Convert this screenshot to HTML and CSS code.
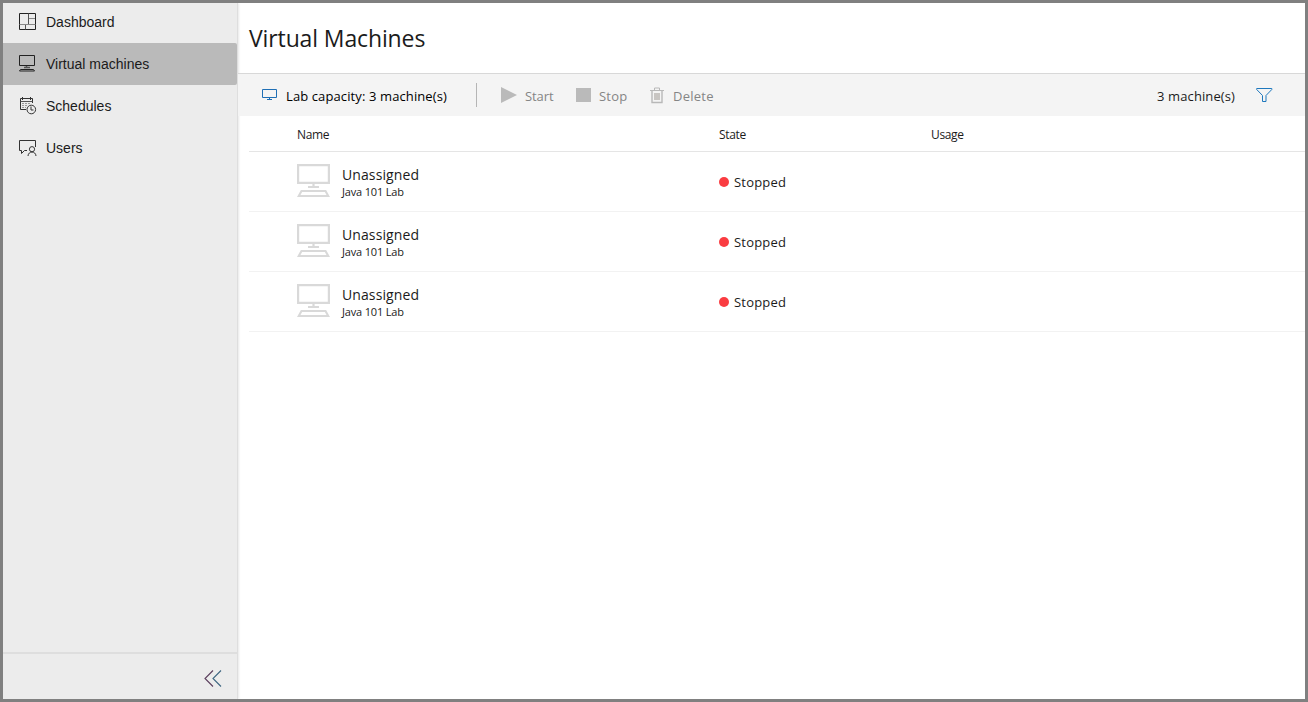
FILE: index.html
```html
<!DOCTYPE html>
<html lang="en">
<head>
<meta charset="utf-8">
<title>Virtual Machines</title>
<link rel="stylesheet" href="styles.css">
</head>
<body>
<svg class="defs" width="0" height="0">
  <symbol id="computer" viewBox="0 0 33 33">
    <path d="M1.100 1.100h30.800v17.800H1.100zM16.500 20v3M11 23h11" fill="none" stroke="#d9d9d9" stroke-width="2.200"/>
    <path d="M4.500 27h24l2.800 5H1.700z" fill="none" stroke="#d9d9d9" stroke-width="2.100"/>
  </symbol>
</svg>
<div class="app">
  <aside class="sidebar">
    <nav class="nav">
      <a class="nav-item">
        <svg width="18" height="18" fill="none" stroke="#222"><path d="M.5.5h16v16H.5z"/><path d="M9.500.5v11M6.500 11.500v5" stroke="#555"/><path d="M.5 11.500h16M10 5.500h6" stroke="#888"/></svg>
        <span>Dashboard</span>
      </a>
      <a class="nav-item selected">
        <svg width="18" height="18" fill="none" stroke="#222"><path d="M.5.5h15v10H.5z"/><path d="M7.500 11v2M5 12.500h6" stroke="#555" stroke-width="1.500"/><path d="M1.500 14.500h13l1 1.500H.5z"/></svg>
        <span>Virtual machines</span>
      </a>
      <a class="nav-item">
        <svg width="18" height="18" fill="none" stroke="#333"><path d="M7 12.500H1.500V1.500h12V6M3.500 0v3M11.500 0v3"/><path d="M1.500 4.500h12" stroke="#555"/><path d="M3 6.500h9M3 8.500h5M3 10.500h4" stroke="#999" stroke-dasharray="2 1"/><circle cx="12.300" cy="12.500" r="4.300"/><path d="M12 9.500v3.500H14.500"/></svg>
        <span>Schedules</span>
      </a>
      <a class="nav-item">
        <svg width="18" height="18" fill="none" stroke="#333"><path d="M8 11.500H5.500L2.500 14.500v-3H.500v-10h16V8"/><circle cx="13" cy="10.200" r="2.600"/><path d="M9 17c.300-5.300 7.700-5.300 8 0"/></svg>
        <span>Users</span>
      </a>
    </nav>
    <div class="collapse">
      <svg width="18" height="18" fill="none" stroke-width="1.100"><path d="M9 .500L1 8.500l8 8" stroke="#5a3d5c"/><path d="M17 .500L9 8.500l8 8" stroke="#3d6580"/></svg>
    </div>
  </aside>
  <main class="main">
    <header class="page-header"><h1>Virtual Machines</h1></header>
    <div class="toolbar">
      <div class="tool capacity">
        <svg width="16" height="14" fill="none" stroke="#1f6fb5"><path d="M.500 1.500h14v8H.500zM7.500 10v1.500M5 11.500h5"/></svg>
        <span class="capacity-text">Lab capacity: 3 machine(s)</span>
      </div>
      <div class="divider"></div>
      <div class="tool disabled start">
        <svg width="16" height="16" fill="#bababa"><path d="M0 0l16 8L0 16z"/></svg>
        <span class="start-text">Start</span>
      </div>
      <div class="tool disabled stop">
        <svg width="15" height="14" fill="#bababa"><path d="M0 0h15v14H0z"/></svg>
        <span class="stop-text">Stop</span>
      </div>
      <div class="tool disabled delete">
        <svg width="14" height="17" fill="none" stroke="#b8b8b8"><path d="M0 3.500h14M4.500 3V1h5v2"/><path d="M2 4v11.500h10V4" stroke-width="1.400"/><path d="M4 6h6v7H4z" fill="#c8c5c2" stroke="none"/></svg>
        <span class="delete-text">Delete</span>
      </div>
      <div class="tool filter">
        <span class="count">3 machine(s)</span>
        <svg width="17" height="16" fill="none" stroke="#1f78bd"><path d="M.700 1.500h15.100v1L10 8.500v6H6.500v-6L.700 2.500z"/></svg>
      </div>
    </div>
    <section class="table">
      <div class="row head"><span class="name">Name</span><span class="state">State</span><span class="usage">Usage</span></div>
      <div class="row">
        <div class="name machine"><svg width="33" height="33"><use href="#computer"/></svg><div class="labels"><div class="user">Unassigned</div><div class="lab">Java 101 Lab</div></div></div>
        <div class="state status"><i class="dot"></i><span>Stopped</span></div>
      </div>
      <div class="row">
        <div class="name machine"><svg width="33" height="33"><use href="#computer"/></svg><div class="labels"><div class="user">Unassigned</div><div class="lab">Java 101 Lab</div></div></div>
        <div class="state status"><i class="dot"></i><span>Stopped</span></div>
      </div>
      <div class="row">
        <div class="name machine"><svg width="33" height="33"><use href="#computer"/></svg><div class="labels"><div class="user">Unassigned</div><div class="lab">Java 101 Lab</div></div></div>
        <div class="state status"><i class="dot"></i><span>Stopped</span></div>
      </div>
    </section>
  </main>
</div>
</body>
</html>
```
FILE: styles.css
```css
* { box-sizing: border-box; }
body { margin: 0; font-family: "Open Sans", "Noto Sans", sans-serif; color: #1b1b1b; }
svg { flex: none; display: block; }
.defs { position: absolute; }
.app { display: flex; width: 1308px; height: 702px; border: 3px solid #808080; background: #fff; overflow: hidden; }
.sidebar { display: flex; flex-direction: column; width: 235px; background: #ececec; border-right: 1px solid #dedede; font-family: "Liberation Sans", Arial, sans-serif; box-shadow: 1px 0 2px #e8e8e8; }
.nav { flex: 1; margin-top: -2px; }
.nav-item { display: flex; align-items: center; gap: 9px; height: 42px; padding-left: 16px; font-size: 14px; line-height: 18px; }
.nav-item svg { width: 18px; }
.selected { background: #bababa; border-radius: 0 2px 2px 0; }
.collapse { height: 47px; border-top: 2px solid #dedede; padding: 16px 15px 0 0; display: flex; justify-content: flex-end; }
.main { flex: 1; min-width: 0; }
.page-header { height: 71px; padding: 19px 0 0 11px; border-bottom: 1px solid #d8d8d8; }
h1 { margin: 0; font-size: 23px; line-height: 32px; font-weight: 400; letter-spacing: -.12px; white-space: nowrap; }
.toolbar { display: flex; align-items: center; height: 42px; background: #f4f4f4; padding: 0 32px 0 24px; font-size: 13px; line-height: 20px; white-space: nowrap; }
.tool { display: flex; align-items: center; gap: 8px; }
.tool span { padding-top: 2px; }
.capacity { width: 214px; gap: 8px; color: #000; }
.capacity-text { letter-spacing: .11px; }
.divider { width: 1px; height: 24px; background: #b5b5b5; margin-right: 24px; }
.disabled { color: #858585; }
.start { width: 75px; }
.start-text { letter-spacing: -.1px; }
.stop { width: 74px; }
.stop-text { letter-spacing: .2px; }
.delete { gap: 9px; }
.delete-text { letter-spacing: .25px; }
.filter { margin-left: auto; gap: 21px; }
.count { letter-spacing: .1px; }
.table { padding-left: 11px; }
.row { display: grid; grid-template-columns: 422px 212px 1fr; align-items: center; height: 60px; padding-left: 48px; border-bottom: 1px solid #f2f2f2; }
.head { height: 36px; border-color: #e5e5e5; font-size: 12px; line-height: 16px; letter-spacing: -.35px; padding-top: 2px; }
.machine { display: flex; gap: 12px; }
.user { font-size: 14px; line-height: 19px; padding-top: 1px; letter-spacing: .1px; }
.lab { font-size: 11px; line-height: 15px; letter-spacing: -.17px; }
.status { display: flex; align-items: center; gap: 5px; font-size: 13px; line-height: 20px; letter-spacing: .2px; }
.dot { width: 10px; height: 10px; border-radius: 50%; background: #fa3c41; }
```
